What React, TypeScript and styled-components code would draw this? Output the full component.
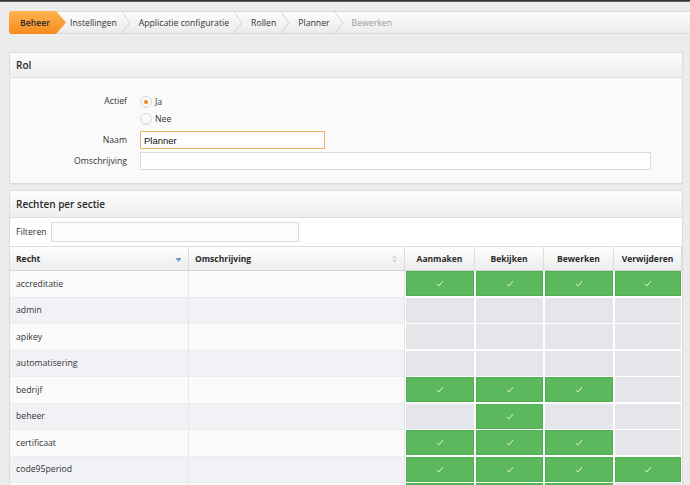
import React from "react";
import styled, { createGlobalStyle } from "styled-components";

const Global = createGlobalStyle`
  html, body { margin: 0; padding: 0; }
  body {
    background: #ececec;
    font-family: "Open Sans", "DejaVu Sans", sans-serif;
    font-size: 8.7px;
    color: #333;
    overflow: hidden;
  }
`;

const Page = styled.div`
  display: flex;
  flex-direction: column;
  min-height: 485px;
`;

const TopLine = styled.div`
  height: 2px;
  background: linear-gradient(#1a1a1a, #777);
`;

const Content = styled.div`
  display: flex;
  flex-direction: column;
  padding: 9px 7px 0 9px;
`;

const Crumbs = styled.nav`
  display: flex;
  align-items: stretch;
  height: 23px;
  margin-right: -7px;
  background: linear-gradient(#fdfdfd, #ebebeb);
  border: 1px solid #dadada;
  border-right: none;
  border-radius: 3px 0 0 3px;
  box-sizing: border-box;
`;

const HomeCrumb = styled.span`
  display: flex;
  align-items: center;
  margin: -1px 0 -1px -1px;
  padding: 0 16px 0 11px;
  background: linear-gradient(#fdb24f, #f68b1f);
  clip-path: polygon(0 0, calc(100% - 10px) 0, 100% 50%, calc(100% - 10px) 100%, 0 100%);
  border-radius: 3px 0 0 3px;
  font-weight: 600;
  color: #2b2b2b;
  font-size: 8.7px;
`;

const Crumb = styled.span<{ $muted?: boolean; $first?: boolean }>`
  display: flex;
  align-items: center;
  gap: 5px;
  margin-left: ${(p) => (p.$first ? "4px" : "8px")};
  color: ${(p) => (p.$muted ? "#9a9a9a" : "#333")};
  font-size: 8.7px;
`;

const Sep = styled.svg`
  display: block;
  width: 9px;
  height: 21px;
`;

const Chevron = () => (
  <Sep viewBox="0 0 9 21">
    <polyline points="0,0 8,10.5 0,21" fill="none" stroke="#cfcfcf" strokeWidth="1" />
    <polyline points="1,0 9,10.2" fill="none" stroke="#fff" strokeWidth="0.8" opacity="0.8" />
  </Sep>
);

const Panel = styled.section<{ $top: number }>`
  margin-top: ${(p) => p.$top}px;
  border: 1px solid #dcdcdc;
  background: #fafafa;
  box-shadow: 0 1px 1px rgba(0, 0, 0, 0.04);
  display: flex;
  flex-direction: column;
`;

const PanelHeader = styled.header<{ $h: number }>`
  height: ${(p) => p.$h}px;
  display: flex;
  align-items: center;
  padding-left: 6px;
  background: linear-gradient(#fdfdfd, #eeeeee);
  border-bottom: 1px solid #dedede;
  font-size: 10px;
  font-weight: 600;
  color: #2a2a2a;
  box-sizing: border-box;
`;

const FormBody = styled.div`
  display: grid;
  grid-template-columns: 117px 1fr;
  column-gap: 13px;
  padding: 15px 0 13px 0;
`;

const Label = styled.label<{ $lh: number; $mt?: number }>`
  text-align: right;
  line-height: ${(p) => p.$lh}px;
  margin-top: ${(p) => p.$mt ?? 0}px;
  color: #333;
`;

const RadioGroup = styled.div`
  display: flex;
  flex-direction: column;
`;

const RadioRow = styled.div`
  display: flex;
  align-items: center;
  gap: 3px;
  height: 17px;
`;

const RadioCircle = styled.span<{ $on?: boolean }>`
  width: 12px;
  height: 12px;
  border-radius: 50%;
  box-sizing: border-box;
  border: 1px solid #d6d6d6;
  background: linear-gradient(#ffffff, #f4f4f4);
  display: inline-flex;
  align-items: center;
  justify-content: center;
  &::after {
    content: "";
    display: ${(p) => (p.$on ? "block" : "none")};
    width: 4px;
    height: 4px;
    border-radius: 50%;
    background: #f7861b;
  }
`;

const TextInput = styled.div<{ $w: number; $focus?: boolean; $mt: number }>`
  width: ${(p) => p.$w}px;
  height: 18px;
  margin-top: ${(p) => p.$mt}px;
  box-sizing: border-box;
  background: #fff;
  border: 1px solid ${(p) => (p.$focus ? "#efb06a" : "#dcdcdc")};
  display: flex;
  align-items: center;
  padding-left: 3px;
  font-family: "Liberation Sans", Arial, sans-serif;
  font-size: 9.5px;
  color: #111;
`;

const FilterRow = styled.div`
  display: flex;
  align-items: center;
  gap: 4px;
  height: 29px;
  padding-left: 6px;
  background: #fff;
  border-bottom: 1px solid #dedede;
  box-sizing: border-box;
`;

const FilterInput = styled.div`
  width: 248px;
  height: 20px;
  box-sizing: border-box;
  border: 1px solid #dcdcdc;
  background: #fcfcfc;
`;

const Grid = styled.div`
  display: grid;
  grid-template-columns: 179px 216px 70px 69px 70px 1fr;
  background: #fff;
`;

const Th = styled.div<{ $center?: boolean }>`
  height: 24px;
  box-sizing: border-box;
  display: flex;
  align-items: center;
  justify-content: ${(p) => (p.$center ? "center" : "space-between")};
  padding: 0 6px;
  background: linear-gradient(#ffffff, #ececec);
  border-bottom: 1px solid #d4d4d4;
  border-right: 1px solid #dcdcdc;
  font-weight: 700;
  font-size: 8.5px;
  color: #2a2a2a;
  &:last-child { border-right: none; }
`;

const Td = styled.div<{ $even: boolean }>`
  height: 26.5px;
  box-sizing: border-box;
  display: flex;
  align-items: center;
  padding-left: 6px;
  background: ${(p) => (p.$even ? "#f1f2f6" : "#fbfbfb")};
  border-bottom: 1px solid #ececec;
  border-right: 1px solid #e6e6e6;
`;

const CheckTd = styled.div`
  height: 26.5px;
  box-sizing: border-box;
  padding: 0 1px 1.5px 1px;
  background: #fff;
  display: flex;
`;

const CheckBox = styled.div<{ $on: boolean }>`
  flex: 1;
  box-sizing: border-box;
  display: flex;
  align-items: center;
  justify-content: center;
  background: ${(p) => (p.$on ? "#5cb85c" : "#e4e6ea")};
  border: 1px solid ${(p) => (p.$on ? "#4fae4f" : "#e4e6ea")};
`;

const SortIcon = styled.svg`
  width: 7px;
  height: 10px;
  display: block;
`;

const SortDown = () => (
  <SortIcon viewBox="0 0 7 10">
    <polygon points="0.5,4 6.5,4 3.5,8" fill="#6b93cf" />
  </SortIcon>
);

const SortBoth = () => (
  <SortIcon viewBox="0 0 7 10">
    <polygon points="1,4.2 6,4.2 3.5,1" fill="#d6d6d6" />
    <polygon points="1,5.8 6,5.8 3.5,9" fill="#d6d6d6" />
  </SortIcon>
);

const Tick = () => (
  <svg width="8" height="7" viewBox="0 0 8 7">
    <polyline points="1,4 3,6 7,1" fill="none" stroke="#eaf7ea" strokeWidth="0.9" />
  </svg>
);

type Row = { id: string; name: string; perms: [boolean, boolean, boolean, boolean] };

const rows: Row[] = [
  { id: "r1", name: "accreditatie", perms: [true, true, true, true] },
  { id: "r2", name: "admin", perms: [false, false, false, false] },
  { id: "r3", name: "apikey", perms: [false, false, false, false] },
  { id: "r4", name: "automatisering", perms: [false, false, false, false] },
  { id: "r5", name: "bedrijf", perms: [true, true, true, false] },
  { id: "r6", name: "beheer", perms: [false, true, false, false] },
  { id: "r7", name: "certificaat", perms: [true, true, true, false] },
  { id: "r8", name: "code95period", perms: [true, true, true, true] },
  { id: "r9", name: "", perms: [true, true, true, false] },
];

const actions = ["Aanmaken", "Bekijken", "Bewerken", "Verwijderen"];

export default function App() {
  return (
    <Page>
      <Global />
      <TopLine />
      <Content>
        <Crumbs>
          <HomeCrumb>Beheer</HomeCrumb>
          <Crumb $first>Instellingen<Chevron /></Crumb>
          <Crumb>Applicatie configuratie<Chevron /></Crumb>
          <Crumb>Rollen<Chevron /></Crumb>
          <Crumb>Planner<Chevron /></Crumb>
          <Crumb $muted>Bewerken</Crumb>
        </Crumbs>

        <Panel $top={18}>
          <PanelHeader $h={25}>Rol</PanelHeader>
          <FormBody>
            <Label $lh={17}>Actief</Label>
            <RadioGroup>
              <RadioRow><RadioCircle $on />Ja</RadioRow>
              <RadioRow><RadioCircle />Nee</RadioRow>
            </RadioGroup>
            <Label $lh={18} $mt={4}>Naam</Label>
            <TextInput $w={185} $focus $mt={4}>Planner</TextInput>
            <Label $lh={18} $mt={3}>Omschrijving</Label>
            <TextInput $w={511} $mt={3} />
          </FormBody>
        </Panel>

        <Panel $top={6}>
          <PanelHeader $h={27}>Rechten per sectie</PanelHeader>
          <FilterRow>
            Filteren
            <FilterInput />
          </FilterRow>
          <Grid>
            <Th>Recht<SortDown /></Th>
            <Th>Omschrijving<SortBoth /></Th>
            {actions.map((a) => (
              <Th key={a} $center>{a}</Th>
            ))}
            {rows.map((r, i) => (
              <React.Fragment key={r.id}>
                <Td $even={i % 2 === 1}>{r.name}</Td>
                <Td $even={i % 2 === 1} />
                {r.perms.map((on, j) => (
                  <CheckTd key={j}>
                    <CheckBox $on={on}>{on && <Tick />}</CheckBox>
                  </CheckTd>
                ))}
              </React.Fragment>
            ))}
          </Grid>
        </Panel>
      </Content>
    </Page>
  );
}
